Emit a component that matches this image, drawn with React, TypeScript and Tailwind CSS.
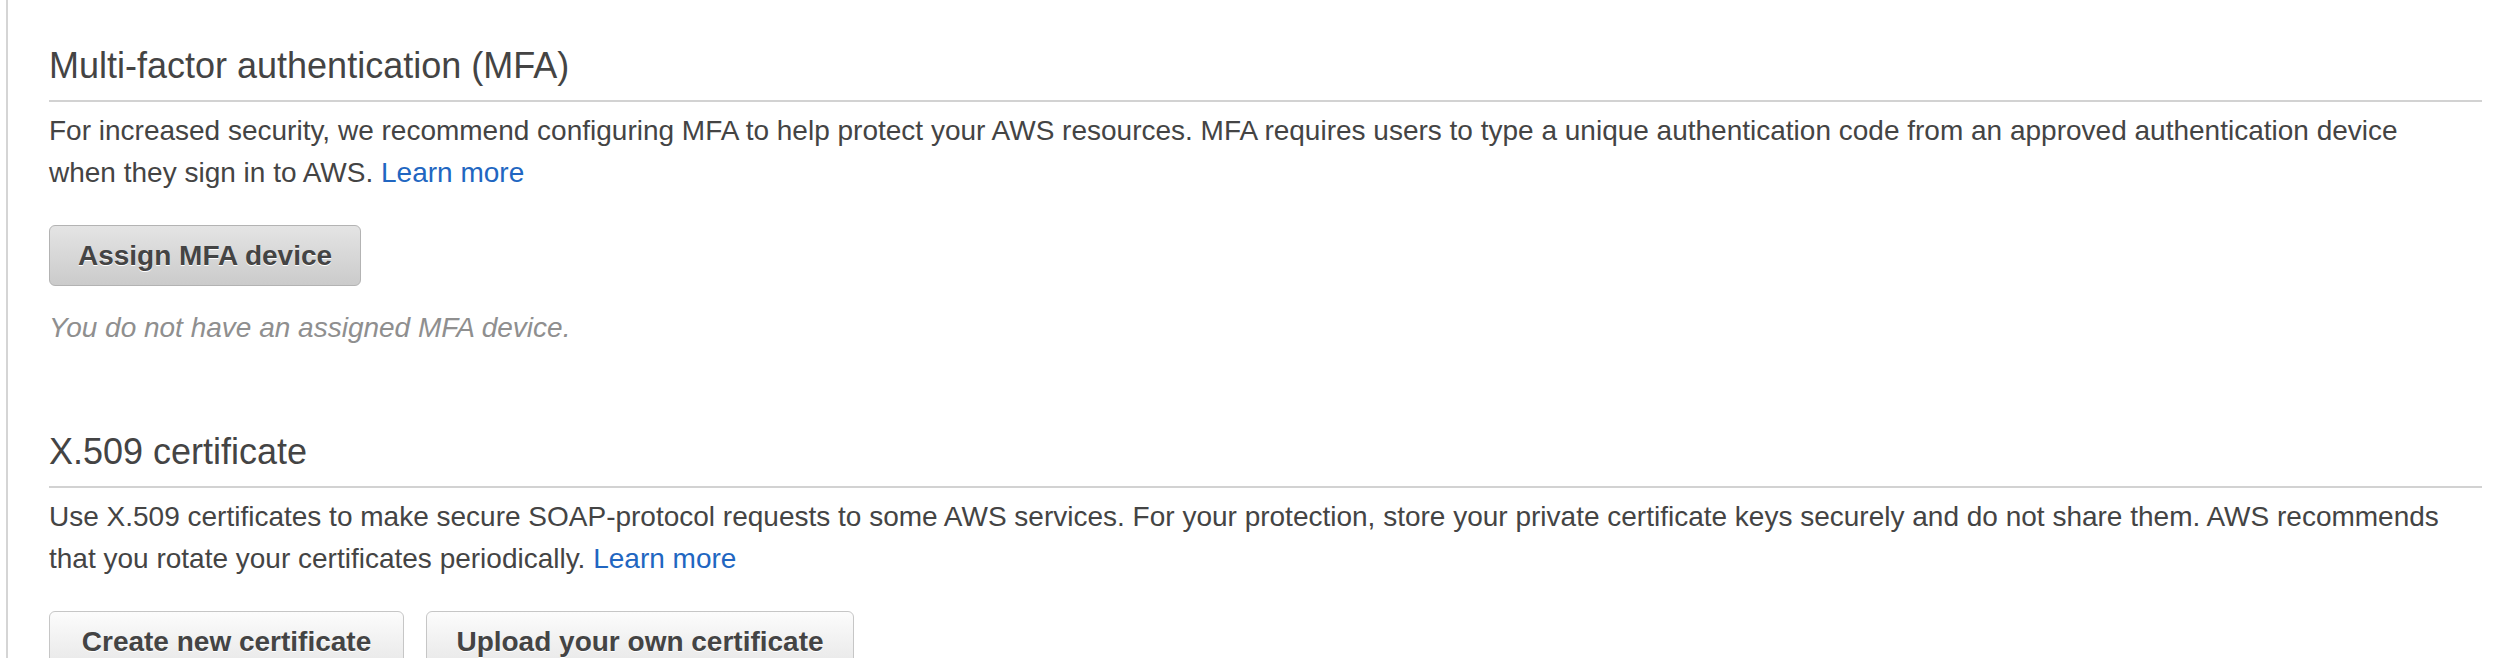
import React from "react";

const font = { fontFamily: '"Liberation Sans", Arial, Helvetica, sans-serif' };

function Heading({ children }: { children: React.ReactNode }) {
  return (
    <h2 className="text-[36px] leading-[44px] font-normal text-[#444] pb-3 border-b-2 border-[#d2d2d2]">
      {children}
    </h2>
  );
}

function Link({ children }: { children: React.ReactNode }) {
  return <a className="text-[#2166c1] no-underline cursor-pointer">{children}</a>;
}

export default function App() {
  return (
    <div className="h-[658px] overflow-hidden bg-white pl-[6px] pr-[12px]" style={font}>
      <div className="h-full border-l-2 border-[#d5d5d5] pl-[41px] pt-[44px]">
        <section>
          <Heading>Multi-factor authentication (MFA)</Heading>
          <p className="mt-2 text-[28px] leading-[42px] text-[#444] whitespace-nowrap">
            For increased security, we recommend configuring MFA to help protect your AWS resources. MFA requires users to type a unique authentication code from an approved authentication device
            <br />
            when they sign in to AWS. <Link>Learn more</Link>
          </p>
          <div className="mt-[31px] flex">
            <button className="h-[61px] w-[312px] flex items-center justify-center rounded-[6px] border border-[#b3b3b3] bg-[linear-gradient(to_bottom,#e4e4e4,#cbcbcb)] text-[28px] font-bold text-[#444] [text-shadow:0_1px_0_#fff]">
              Assign MFA device
            </button>
          </div>
          <p className="mt-[21px] text-[28px] leading-[42px] italic text-[#8f8f8f]">
            You do not have an assigned MFA device.
          </p>
        </section>
        <section className="mt-[81px]">
          <Heading>X.509 certificate</Heading>
          <p className="mt-2 text-[28px] leading-[42px] text-[#444] whitespace-nowrap">
            Use X.509 certificates to make secure SOAP-protocol requests to some AWS services. For your protection, store your private certificate keys securely and do not share them. AWS recommends
            <br />
            that you rotate your certificates periodically. <Link>Learn more</Link>
          </p>
          <div className="mt-[31px] flex gap-[22px]">
            <button className="h-[61px] w-[355px] flex items-center justify-center rounded-[6px] border border-[#c6c6c6] bg-[linear-gradient(to_bottom,#fcfcfc,#e6e6e6)] text-[28px] font-bold text-[#444] [text-shadow:0_1px_0_#fff]">
              Create new certificate
            </button>
            <button className="h-[61px] w-[428px] flex items-center justify-center rounded-[6px] border border-[#c6c6c6] bg-[linear-gradient(to_bottom,#fcfcfc,#e6e6e6)] text-[28px] font-bold text-[#444] [text-shadow:0_1px_0_#fff]">
              Upload your own certificate
            </button>
          </div>
        </section>
      </div>
    </div>
  );
}
